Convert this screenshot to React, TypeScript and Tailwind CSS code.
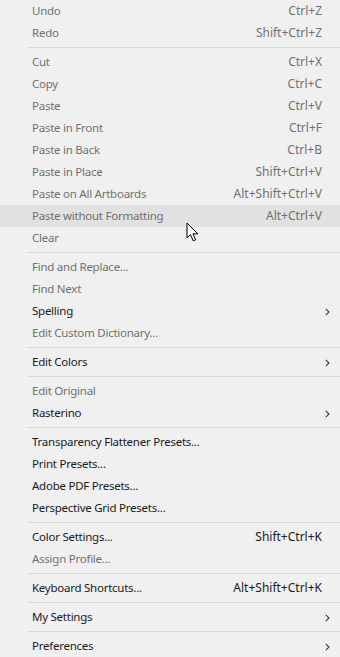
import React from "react";

type Item =
  | { sep: true }
  | { label: string; shortcut?: string; enabled?: boolean; sub?: boolean; hover?: boolean };

const items: Item[] = [
  { label: "Undo", shortcut: "Ctrl+Z" },
  { label: "Redo", shortcut: "Shift+Ctrl+Z" },
  { sep: true },
  { label: "Cut", shortcut: "Ctrl+X" },
  { label: "Copy", shortcut: "Ctrl+C" },
  { label: "Paste", shortcut: "Ctrl+V" },
  { label: "Paste in Front", shortcut: "Ctrl+F" },
  { label: "Paste in Back", shortcut: "Ctrl+B" },
  { label: "Paste in Place", shortcut: "Shift+Ctrl+V" },
  { label: "Paste on All Artboards", shortcut: "Alt+Shift+Ctrl+V" },
  { label: "Paste without Formatting", shortcut: "Alt+Ctrl+V", hover: true },
  { label: "Clear" },
  { sep: true },
  { label: "Find and Replace..." },
  { label: "Find Next" },
  { label: "Spelling", enabled: true, sub: true },
  { label: "Edit Custom Dictionary..." },
  { sep: true },
  { label: "Edit Colors", enabled: true, sub: true },
  { sep: true },
  { label: "Edit Original" },
  { label: "Rasterino", enabled: true, sub: true },
  { sep: true },
  { label: "Transparency Flattener Presets...", enabled: true },
  { label: "Print Presets...", enabled: true },
  { label: "Adobe PDF Presets...", enabled: true },
  { label: "Perspective Grid Presets...", enabled: true },
  { sep: true },
  { label: "Color Settings...", shortcut: "Shift+Ctrl+K", enabled: true },
  { label: "Assign Profile..." },
  { sep: true },
  { label: "Keyboard Shortcuts...", shortcut: "Alt+Shift+Ctrl+K", enabled: true },
  { sep: true },
  { label: "My Settings", enabled: true, sub: true },
  { sep: true },
  { label: "Preferences", enabled: true, sub: true },
];

function Chevron() {
  return (
    <svg width="5" height="8" viewBox="0 0 5 8" className="absolute right-[10px] top-[8px]">
      <path d="M0.8 0.8 L4 4 L0.8 7.2" fill="none" stroke="#3a3a3a" strokeWidth="1.1" />
    </svg>
  );
}

function Cursor() {
  return (
    <svg
      width="14"
      height="21"
      viewBox="0 0 14 21"
      className="absolute left-[186px] top-[222px]"
    >
      <path
        d="M1 1 L1 16 L4.5 12.6 L7.2 18.8 L9.6 17.8 L7 11.8 L11.8 11.8 Z"
        fill="#ffffff"
        stroke="#000000"
        strokeWidth="1"
        strokeLinejoin="miter"
      />
    </svg>
  );
}

export default function App() {
  return (
    <div
      className="relative w-[340px] h-[657px] bg-[#f0f0f0] overflow-hidden text-[12px]"
      style={{ fontFamily: '"Noto Sans", "Open Sans", sans-serif' }}
    >
      {items.map((it, i) => {
        if ("sep" in it) {
          return (
            <div key={i} className="h-[7px] pt-[3px] pl-[28px]">
              <div className="h-px bg-[#d7d7d7]" />
            </div>
          );
        }
        const color = it.enabled ? "text-[#1a1a1a]" : "text-[#707070]";
        return (
          <div
            key={i}
            className={`relative h-[22px] flex items-center pl-[32px] pr-[18px] ${color} ${
              it.hover ? "bg-[#e1e1e1]" : ""
            }`}
          >
            <span className="flex-1 whitespace-nowrap text-[11.5px] tracking-[-0.25px]">{it.label}</span>
            {it.shortcut && <span className="whitespace-nowrap">{it.shortcut}</span>}
            {it.sub && <Chevron />}
          </div>
        );
      })}
      <Cursor />
    </div>
  );
}
